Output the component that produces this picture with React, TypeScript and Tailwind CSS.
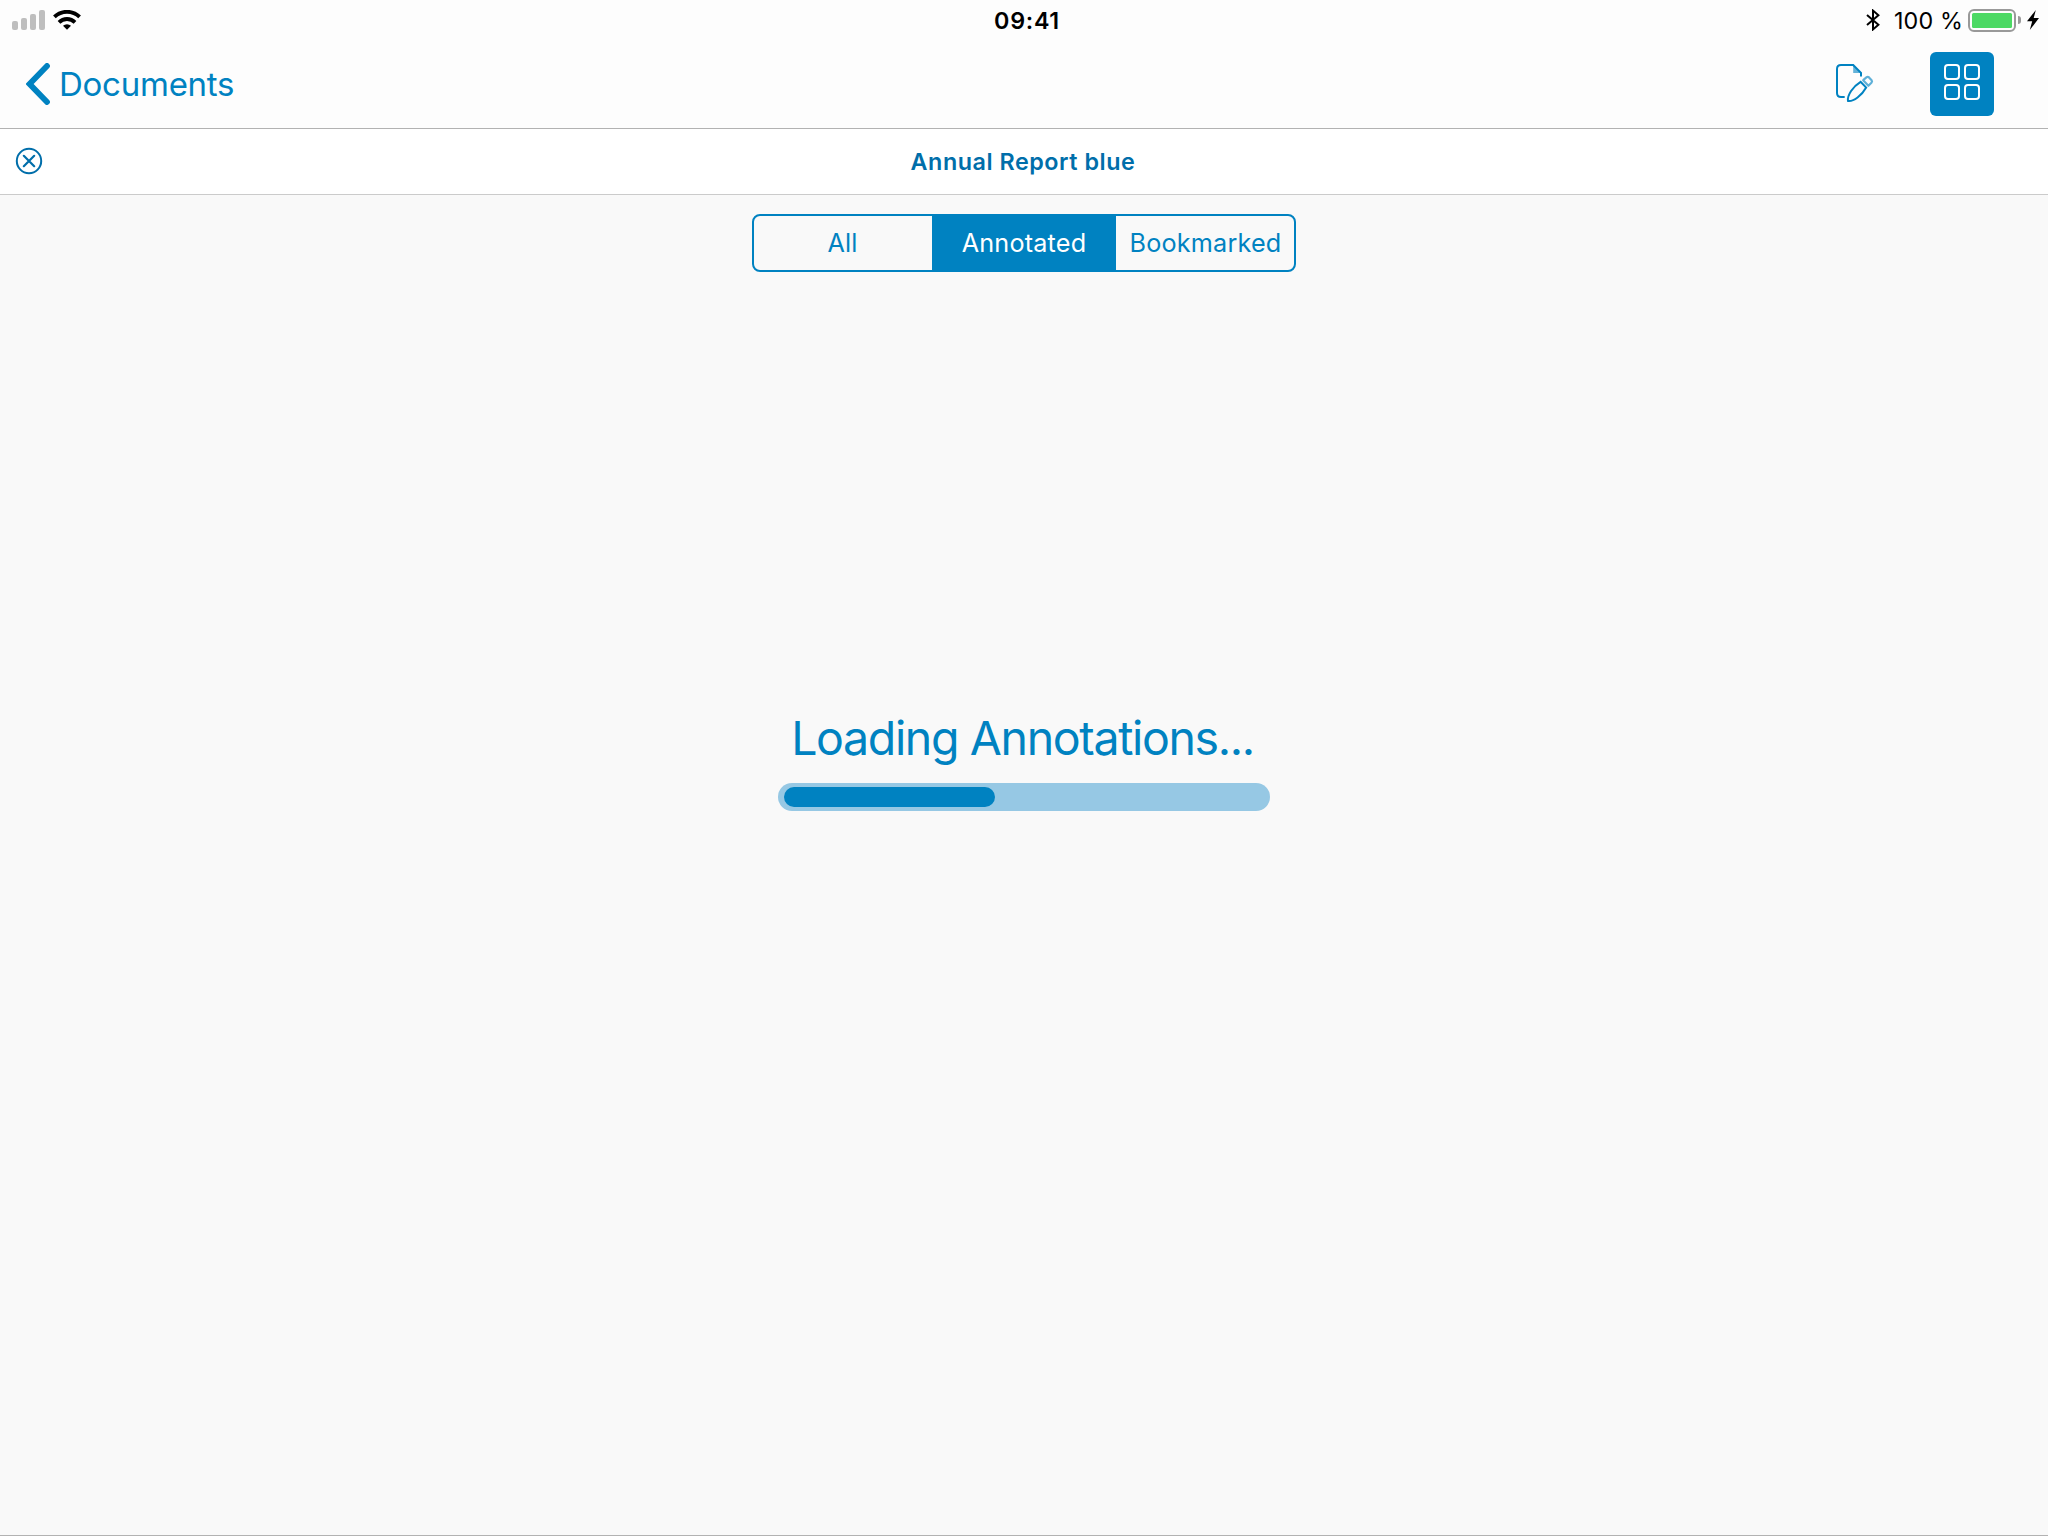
const SIGNAL = ['h-[9px]', 'h-3', 'h-4', 'h-5'];

function Wifi() {
  return (
    <svg className="ml-2 h-5 w-7" viewBox="0 0 28 20" fill="none" stroke="#000">
      <path d="M1.4 6.9A18 18 0 0 1 26.6 6.9" strokeWidth="3.8" />
      <path d="M6 12.3A11.4 11.4 0 0 1 22 12.3" strokeWidth="3.8" />
      <path d="M14 19.8 L10 15.8 A5.8 5.8 0 0 1 18 15.8 Z" fill="#000" stroke="none" />
    </svg>
  );
}

function StatusBar() {
  return (
    <div className="grid h-10 grid-cols-3 items-center text-black">
      <div className="flex h-5 items-end pl-3">
        <div className="flex items-end gap-[3px]">
          {SIGNAL.map((h) => (
            <span key={h} className={`w-1.5 rounded-[2px] bg-[#bebebe] ${h}`} />
          ))}
        </div>
        <Wifi />
      </div>
      <div className="pt-0.5 pl-[6px] text-center text-[23.3px] leading-9 font-semibold tracking-[0.7px]">09:41</div>
      <div className="flex items-center justify-end pr-[9px]">
        <svg className="mr-3.5 h-[22px] w-[14px]" viewBox="0 0 14 22" fill="none" stroke="#000" strokeWidth="2">
          <path d="M1 6 L12.4 15.8 L7 20.4 V1.6 L12.4 6.2 L1 16" />
        </svg>
        <span className="pt-0.5 text-[23.3px] leading-9 tracking-[0.15px]">100 %</span>
        <span className="mt-[1px] ml-[5px] h-[23px] w-12 rounded-[6px] border-2 border-[#999] p-0.5">
          <span className="block h-full w-full rounded-[1.5px] bg-[#4cd964]" />
        </span>
        <span className="ml-0.5 h-2 w-[3px] rounded-r-full bg-[#999]" />
        <svg className="ml-[6px] h-5 w-3" viewBox="0 0 12 20">
          <path d="M8.8 0 L0 11.3 H5.2 L2.8 20 L12 8 H6.7 Z" fill="#000" />
        </svg>
      </div>
    </div>
  );
}

function EditIcon() {
  return (
    <svg className="h-10 w-10" viewBox="0 0 40 40" fill="none" stroke="#0082c1" strokeWidth="2">
      <path d="M17.2 1 L25.6 9 H17.2 Z" fill="#0082c1" fillOpacity=".6" stroke="none" />
      <path d="M8.7 33 H5 Q1 33 1 29 V5 Q1 1 5 1 H17.2 L25 8.8 V12.5" />
      <path d="M12 37 C11 31.5 17 22.4 24.6 17.8 L30.2 23.6 C26 31.2 17.4 38 12 37 Z" />
      <path
        d="M27.2 16.2 L30.4 13.4 Q31.8 12.2 33 13.4 L35.6 16.2 Q36.6 17.4 35.4 18.8 L32.4 21.8 Z"
        stroke="#5fb0d8"
        strokeWidth="2.2"
        strokeLinejoin="round"
      />
    </svg>
  );
}

function NavBar() {
  return (
    <div className="flex h-[88px] items-center justify-between pr-[54px] pl-[26px]">
      <button className="flex items-center text-[#0082c1]">
        <svg className="h-[42px] w-6" viewBox="0 0 24 42" fill="none" stroke="currentColor">
          <path d="M21 3 L3.6 21 L21 39" strokeWidth="5.8" strokeLinecap="round" strokeLinejoin="miter" />
        </svg>
        <span className="ml-[9px] text-[33px] leading-10 tracking-[-0.25px]">Documents</span>
      </button>
      <div className="flex items-center">
        <EditIcon />
        <button className="ml-[54px] grid h-16 w-16 place-content-center grid-cols-[16px_16px] grid-rows-[16px_16px] gap-1 rounded-[6px] bg-[#0082c1] pb-1">
          {[0, 1, 2, 3].map((i) => (
            <span key={i} className="rounded-[4px] border-2 border-white" />
          ))}
        </button>
      </div>
    </div>
  );
}

function DocumentTab() {
  return (
    <div className="flex h-[66px] items-center border-b border-[#cbcbcb] bg-white text-[#006eaa]">
      <svg className="mb-[1px] ml-[15px] h-7 w-7" viewBox="0 0 28 28" fill="none" stroke="currentColor">
        <circle cx="14" cy="14" r="12.2" strokeWidth="2" />
        <path d="M8.8 8.8 L19.2 19.2 M19.2 8.8 L8.8 19.2" strokeWidth="2.2" strokeLinecap="round" />
      </svg>
      <h1 className="flex-1 pt-[1px] pr-[45px] text-center text-[23.3px] font-semibold tracking-[0.55px]">Annual Report blue</h1>
    </div>
  );
}

function FilterControl() {
  return (
    <div className="mx-auto mt-[19px] grid h-[58px] w-[544px] grid-cols-[178px_184px_178px] overflow-hidden rounded-[8px] border-2 border-[#0082c1] text-[25.2px] tracking-[0.2px] text-[#0082c1]">
      <button className="pt-0.5 pr-[1px]">All</button>
      <button className="bg-[#0082c1] pt-0.5 text-white">Annotated</button>
      <button className="pt-0.5 pl-[1px]">Bookmarked</button>
    </div>
  );
}

export default function App() {
  return (
    <div className="flex h-[1536px] w-[2048px] flex-col border-b border-[#b2b2b2] bg-[#f9f9f9] font-[Inter,sans-serif]">
      <header className="border-b border-[#b2b2b2] bg-[#fdfdfd]">
        <StatusBar />
        <NavBar />
      </header>
      <DocumentTab />
      <FilterControl />
      <main className="mt-[436px] flex flex-col items-center">
        <p className="pr-[3px] text-[46.5px] leading-[60px] tracking-[-1.36px] text-[#0082c1]">Loading Annotations...</p>
        <div className="mt-[15px] h-7 w-[492px] rounded-full bg-[#96c8e4] px-1.5 py-1">
          <div className="h-5 w-[211px] rounded-full bg-[#0082c1]" />
        </div>
      </main>
    </div>
  );
}
